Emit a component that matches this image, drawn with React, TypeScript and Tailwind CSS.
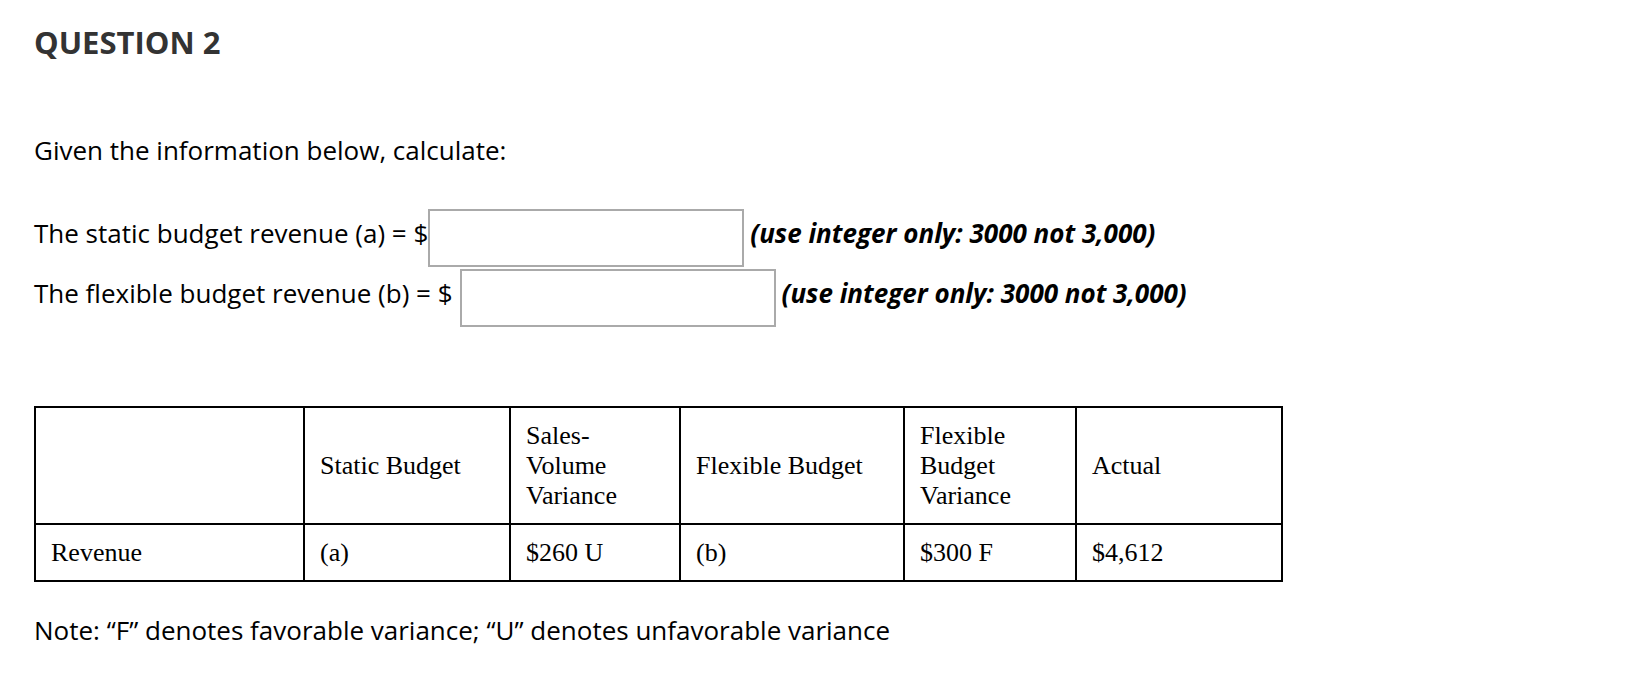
const headers = ['', 'Static Budget', 'Sales-\nVolume\nVariance', 'Flexible Budget', 'Flexible\nBudget\nVariance', 'Actual'];
const values = ['Revenue', '(a)', '$260 U', '(b)', '$300 F', '$4,612'];
const colWidths = ['w-[269px]', 'w-[206px]', 'w-[170px]', 'w-[224px]', 'w-[172px]', 'w-[206px]'];

export default function App() {
  return (
    <div className="min-h-screen bg-white pl-[34px] pt-[22px] font-['Open_Sans',sans-serif] text-black">
      <h1 className="text-[31px] font-bold leading-[40px] text-[#333]">QUESTION 2</h1>

      <p className="mt-[70px] text-[26px] leading-[36px]">Given the information below, calculate:</p>

      <div className="mt-[41px] space-y-[2px] text-[26px] leading-[36px]">
        <AnswerRow label="The static budget revenue (a) = $" gap="ml-0" />
        <AnswerRow label="The flexible budget revenue (b) = $" gap="ml-[7px]" />
      </div>

      <table className="mt-[79px] w-[1247px] table-fixed border-collapse font-['Liberation_Serif','Times_New_Roman',serif] text-[26px] leading-[30px]">
        <colgroup>
          {colWidths.map((w, i) => (
            <col key={i} className={w} />
          ))}
        </colgroup>
        <tbody>
          <tr className="h-[117px]">
            {headers.map((h, i) => (
              <td key={i} className="whitespace-pre-line border-2 border-black pl-[15px] pr-[10px] align-middle">
                {h}
              </td>
            ))}
          </tr>
          <tr className="h-[57px]">
            {values.map((v, i) => (
              <td key={i} className="border-2 border-black pl-[15px] pr-[10px] align-middle">
                {v}
              </td>
            ))}
          </tr>
        </tbody>
      </table>

      <p className="mt-[30px] text-[26px] leading-[36px]">
        Note: “F” denotes favorable variance; “U” denotes unfavorable variance
      </p>
    </div>
  );
}

function AnswerRow({ label, gap }: { label: string; gap: string }) {
  return (
    <div className="flex items-start whitespace-nowrap">
      <span className="mt-[6px]">{label}</span>
      <input type="text" aria-label={label} className={`${gap} h-[58px] w-[316px] border-2 border-[#aaa] bg-white px-2 outline-none`} />
      <span className="ml-[6px] mt-[6px] font-bold italic">(use integer only: 3000 not 3,000)</span>
    </div>
  );
}
